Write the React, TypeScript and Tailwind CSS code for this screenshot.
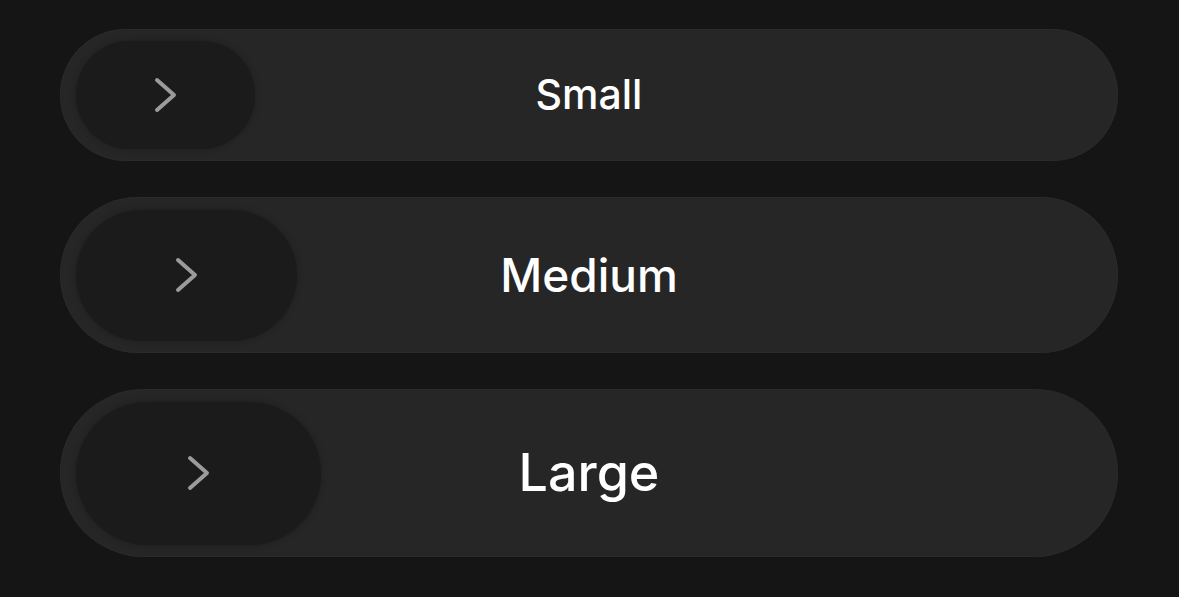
import { ChevronRight } from 'lucide-react'

// ─── Slider rows ──────────────────────────────────────────────────────────────
const ROWS = [
  { label: 'Small',  track: 'h-[132px]', knob: 'w-[179px] h-[108px]', text: 'text-[41px]' },
  { label: 'Medium', track: 'h-[156px]', knob: 'w-[221px] h-[131px]', text: 'text-[46px]' },
  { label: 'Large',  track: 'h-[168px]', knob: 'w-[245px] h-[143px]', text: 'text-[52px]' },
] as const

function Chevron() {
  return (
    <svg width="26" height="38" viewBox="0 0 26 38" fill="none">
      <polyline
        points="4,4 21,19 4,34"
        stroke="#9b9b9b"
        strokeWidth="4"
        strokeLinecap="round"
        strokeLinejoin="round"
      />
    </svg>
  )
}

export default function App() {
  return (
    <div
      className="w-[1179px] h-[597px] bg-[#151515] flex flex-col gap-9 pt-[29px] pl-[60px] pr-[61px]"
      style={{ fontFamily: 'Inter, "Liberation Sans", sans-serif' }}
    >
      {ROWS.map(({ label, track, knob, text }) => (
        <div
          key={label}
          className={`grid w-full ${track} rounded-full bg-[#262626] shadow-[inset_0_0_0_1px_#2a2a2a]`}
        >
          <span
            className={`col-start-1 row-start-1 place-self-center font-medium text-white ${text}`}
          >
            {label}
          </span>
          <div
            className={`col-start-1 row-start-1 self-center justify-self-start ml-4 ${knob} rounded-full bg-[#1b1b1b] shadow-[0_0_6px_rgba(0,0,0,0.25)] flex items-center justify-center`}
          >
            <Chevron />
          </div>
        </div>
      ))}
    </div>
  )
}
